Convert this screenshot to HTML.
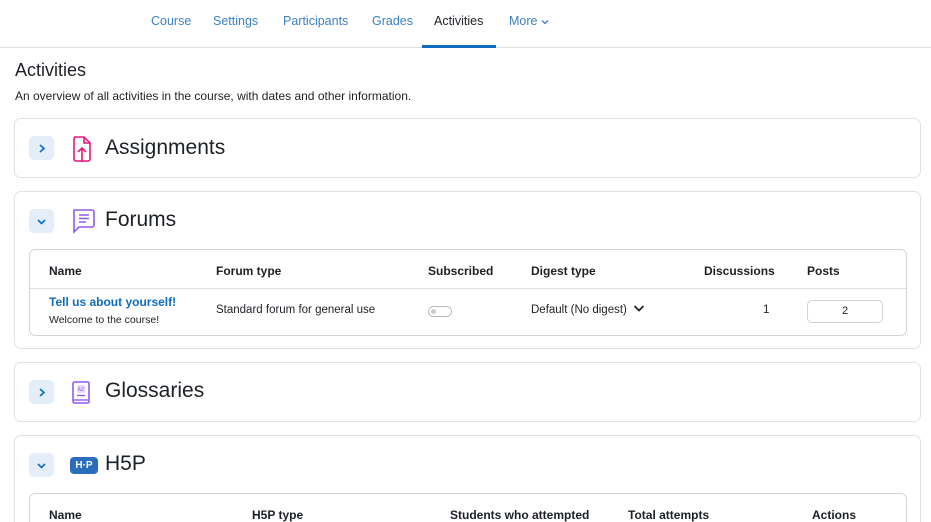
<!DOCTYPE html>
<html style="width:931px;height:522px;overflow:hidden"><head><meta charset="utf-8"><style>
*{box-sizing:border-box;margin:0;padding:0}
body{width:931px;height:522px;overflow:hidden;background:#fff;font-family:"Liberation Sans","DejaVu Sans",sans-serif;color:#1d2125;position:relative}
.nav{position:absolute;left:0;top:0;width:931px;height:48px;border-bottom:1px solid #dee2e6}
.nav span{position:absolute;top:14px;font-size:12.5px;color:#3d7fc4}
.nav .act{color:#1d2125}
.ul{position:absolute;left:422px;top:45px;width:74px;height:3px;background:#0f6cbf}
h1{position:absolute;left:15px;top:60px;font-size:18px;font-weight:normal}
.sub{position:absolute;left:15px;top:89px;font-size:12px}
.card{position:absolute;left:14px;width:907px;border:1px solid #dee2e6;border-radius:7px;overflow:hidden}
.tg{position:absolute;left:14px;width:25px;height:24px;background:#e3eef8;border-radius:5px}
.tg svg{position:absolute;left:7px;top:7px}
.ic{position:absolute;left:55px}
.tt{position:absolute;left:90px;font-size:21px}
.tbl{position:absolute;left:14px;width:878px;border:1px solid #cfd4d9;border-radius:6px;font-size:12px}
.th{position:absolute;font-weight:bold;font-size:12px}
.td{position:absolute;font-size:11.5px}
</style></head><body>
<div class="nav">
<span style="left:151px">Course</span>
<span style="left:213px">Settings</span>
<span style="left:283px">Participants</span>
<span style="left:372px">Grades</span>
<span class="act" style="left:434px">Activities</span>
<span style="left:509px">More <svg width="8" height="6" viewBox="0 0 8 6"><path d="M1 1.5l3 3 3-3" stroke="#3d7fc4" stroke-width="1.3" fill="none"/></svg></span>
</div>
<div class="ul"></div>
<h1>Activities</h1>
<div class="sub">An overview of all activities in the course, with dates and other information.</div>

<div class="card" style="top:118px;height:60px">
<div class="tg" style="top:17px"><svg width="11" height="11" viewBox="0 0 11 11"><path d="M4 2l4 3.5-4 3.5" stroke="#0f6cbf" stroke-width="1.6" fill="none"/></svg></div>
<svg class="ic" style="top:16px" width="24" height="28" viewBox="0 0 24 28"><path d="M4 2h10l6 6v16a2 2 0 0 1-2 2H6a2 2 0 0 1-2-2V4a2 2 0 0 1 2-2z" stroke="#e5197a" stroke-width="1.6" fill="none"/><path d="M14 2v6h6" stroke="#e5197a" stroke-width="1.6" fill="none"/><path d="M12 27V13M8 17l4-4 4 4" stroke="#e5197a" stroke-width="1.6" fill="none"/></svg>
<div class="tt" style="top:17px">Assignments</div>
</div>

<div class="card" style="top:191px;height:158px">
<div class="tg" style="top:17px"><svg width="11" height="11" viewBox="0 0 11 11"><path d="M2 4l3.5 3.5 3.5-3.5" stroke="#0f6cbf" stroke-width="1.6" fill="none"/></svg></div>
<svg class="ic" style="top:16px" width="26" height="26" viewBox="0 0 26 26"><path d="M4 2h18a2 2 0 0 1 2 2v13a2 2 0 0 1-2 2H9l-5 5V4a2 2 0 0 1 0-2z" stroke="#8f5cf2" stroke-width="1.6" fill="none"/><path d="M9 7h10M9 10.5h10M9 14h7" stroke="#8f5cf2" stroke-width="1.6"/></svg>
<div class="tt" style="top:16px">Forums</div>
<div class="tbl" style="top:57px;height:87px">
<div class="th" style="left:19px;top:14px">Name</div>
<div class="th" style="left:186px;top:14px">Forum type</div>
<div class="th" style="left:398px;top:14px">Subscribed</div>
<div class="th" style="left:501px;top:14px">Digest type</div>
<div class="th" style="left:674px;top:14px">Discussions</div>
<div class="th" style="left:777px;top:14px">Posts</div>
<div style="position:absolute;left:0;right:0;top:38px;border-top:1px solid #dee2e6"></div>
<div class="td" style="left:19px;top:45px;font-size:12px;font-weight:bold;color:#0f6cbf">Tell us about yourself!</div>
<div class="td" style="left:19px;top:64px;font-size:10.5px">Welcome to the course!</div>
<div class="td" style="left:186px;top:54px">Standard forum for general use</div>
<div style="position:absolute;left:398px;top:56px;width:24px;height:11px;border:1px solid #bbb;border-radius:6px"><div style="position:absolute;left:2px;top:2px;width:5px;height:5px;border-radius:50%;background:#ccc"></div></div>
<div class="td" style="left:501px;top:54px">Default (No digest) <svg width="12" height="9" viewBox="0 0 12 9" style="margin-left:3px"><path d="M1.5 2l4.5 4.5 4.5-4.5" stroke="#1d2125" stroke-width="1.7" fill="none"/></svg></div>
<div class="td" style="left:733px;top:54px">1</div>
<div style="position:absolute;left:777px;top:50px;width:76px;height:23px;border:1px solid #cfd4d9;border-radius:5px;font-size:11px;text-align:center;line-height:21px">2</div>
</div>
</div>

<div class="card" style="top:362px;height:60px">
<div class="tg" style="top:17px"><svg width="11" height="11" viewBox="0 0 11 11"><path d="M4 2l4 3.5-4 3.5" stroke="#0f6cbf" stroke-width="1.6" fill="none"/></svg></div>
<svg class="ic" style="top:17px" width="22" height="26" viewBox="0 0 22 26"><rect x="3" y="2" width="16" height="21" rx="1.5" stroke="#8f5cf2" stroke-width="1.6" fill="none"/><path d="M3 20h16" stroke="#8f5cf2" stroke-width="1.4"/><rect x="7" y="5" width="8" height="8" fill="#e6dcfb"/><text x="11" y="11" font-size="5" text-anchor="middle" fill="#8f5cf2" font-family="Liberation Sans">AZ</text><path d="M7 15.5h8" stroke="#8f5cf2" stroke-width="1.4"/></svg>
<div class="tt" style="top:16px">Glossaries</div>
</div>

<div class="card" style="top:435px;height:87px;border-bottom:none;border-radius:7px 7px 0 0">
<div class="tg" style="top:17px"><svg width="11" height="11" viewBox="0 0 11 11"><path d="M2 4l3.5 3.5 3.5-3.5" stroke="#0f6cbf" stroke-width="1.6" fill="none"/></svg></div>
<div style="position:absolute;left:55px;top:21px;width:28px;height:17px;background:#2a6ebb;border-radius:4px;color:#fff;font-size:10px;font-weight:bold;text-align:center;line-height:17px">H·P</div>
<div class="tt" style="top:16px">H5P</div>
<div class="tbl" style="top:57px;height:60px">
<div class="th" style="left:19px;top:14px">Name</div>
<div class="th" style="left:222px;top:14px">H5P type</div>
<div class="th" style="left:420px;top:14px">Students who attempted</div>
<div class="th" style="left:598px;top:14px">Total attempts</div>
<div class="th" style="left:782px;top:14px">Actions</div>
</div>
</div>
</body></html>
